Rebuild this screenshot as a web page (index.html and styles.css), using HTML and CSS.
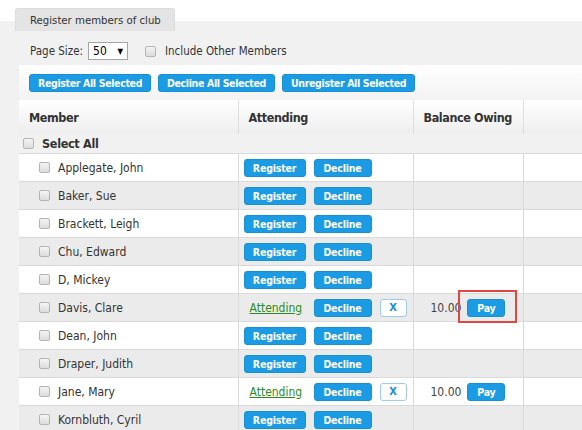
FILE: index.html
```html
<!DOCTYPE html>
<html>
<head>
<meta charset="utf-8">
<link rel="stylesheet" href="styles.css">
</head>
<body>
<div class="page">
  <div class="tab">Register members of club</div>
  <div class="panel">
    <div class="options">
      <span class="label">Page Size:</span>
      <span class="select"><span>50</span><span class="arrow">▼</span></span>
      <span class="cb"></span>
      <span class="label">Include Other Members</span>
    </div>
    <div class="bar">
      <span class="btn big">Register All Selected</span>
      <span class="btn big">Decline All Selected</span>
      <span class="btn big">Unregister All Selected</span>
    </div>
    <table class="grid">
      <colgroup><col class="c1"><col class="c2"><col class="c3"><col class="c4"></colgroup>
      <thead>
        <tr><th>Member</th><th>Attending</th><th>Balance Owing</th><th></th></tr>
      </thead>
      <tbody>
        <tr class="all"><td colspan="4"><span class="cb"></span><b>Select All</b></td></tr>
        <tr><td class="name"><span class="cb"></span>Applegate, John</td><td class="att"><span class="btn reg">Register</span><span class="btn dec">Decline</span></td><td></td><td></td></tr>
        <tr class="alt"><td class="name"><span class="cb"></span>Baker, Sue</td><td class="att"><span class="btn reg">Register</span><span class="btn dec">Decline</span></td><td></td><td></td></tr>
        <tr><td class="name"><span class="cb"></span>Brackett, Leigh</td><td class="att"><span class="btn reg">Register</span><span class="btn dec">Decline</span></td><td></td><td></td></tr>
        <tr class="alt"><td class="name"><span class="cb"></span>Chu, Edward</td><td class="att"><span class="btn reg">Register</span><span class="btn dec">Decline</span></td><td></td><td></td></tr>
        <tr><td class="name"><span class="cb"></span>D, Mickey</td><td class="att"><span class="btn reg">Register</span><span class="btn dec">Decline</span></td><td></td><td></td></tr>
        <tr class="alt"><td class="name"><span class="cb"></span>Davis, Clare</td><td class="att"><a class="going">Attending</a><span class="btn dec">Decline</span><span class="xbtn">X</span></td><td class="bal"><span class="amt">10.00</span><span class="btn pay hl">Pay</span></td><td></td></tr>
        <tr><td class="name"><span class="cb"></span>Dean, John</td><td class="att"><span class="btn reg">Register</span><span class="btn dec">Decline</span></td><td></td><td></td></tr>
        <tr class="alt"><td class="name"><span class="cb"></span>Draper, Judith</td><td class="att"><span class="btn reg">Register</span><span class="btn dec">Decline</span></td><td></td><td></td></tr>
        <tr><td class="name"><span class="cb"></span>Jane, Mary</td><td class="att"><a class="going">Attending</a><span class="btn dec">Decline</span><span class="xbtn">X</span></td><td class="bal"><span class="amt">10.00</span><span class="btn pay">Pay</span></td><td></td></tr>
        <tr class="alt"><td class="name"><span class="cb"></span>Kornbluth, Cyril</td><td class="att"><span class="btn reg">Register</span><span class="btn dec">Decline</span></td><td></td><td></td></tr>
      </tbody>
    </table>
  </div>
</div>
</body>
</html>
```
FILE: styles.css
```css
html, body {
  margin: 0;
  padding: 0;
  overflow: hidden;
}
body {
  font-family: "DejaVu Sans Condensed", "DejaVu Sans", sans-serif;
  font-size: 12px;
  color: #333;
  background: linear-gradient(#fff 21px, #f2f1f2 21px);
  height: 430px;
}
.page {
  padding-top: 8px;
}
.tab {
  display: inline-block;
  margin-left: 15px;
  height: 23px;
  line-height: 23px;
  width: 160px;
  box-sizing: border-box;
  padding-left: 14px;
  font-size: 11.3px;
  background: #e4e4e4;
  border: 1px solid #dcdcdc;
  border-bottom: none;
  border-radius: 3px 3px 0 0;
  color: #333;
}
.panel {
  padding-top: 11px;
}
.options {
  display: flex;
  align-items: center;
  height: 18px;
  padding-left: 30px;
  font-size: 11.5px;
}
.select {
  display: inline-flex;
  justify-content: space-between;
  align-items: center;
  width: 40px;
  height: 18px;
  box-sizing: border-box;
  margin-left: 5px;
  padding: 0 4px 0 4px;
  background: #fff;
  border: 1px solid #a6a6a6;
  color: #000;
  font-size: 12px;
}
.select .arrow {
  font-size: 8px;
}
.options .cb {
  margin: 0 9px 0 17px;
}
.cb {
  display: inline-block;
  width: 11px;
  height: 11px;
  box-sizing: border-box;
  border: 1px solid #b5b5b5;
  border-radius: 2px;
  background: linear-gradient(#f4f4f4, #dcdcdc);
  vertical-align: -1px;
}
.bar {
  margin-top: 5px;
  margin-left: 19px;
  height: 35px;
  box-sizing: border-box;
  padding: 9px 0 0 10px;
  background: linear-gradient(#fff, #f3f3f3);
  display: flex;
  gap: 7px;
  align-items: flex-start;
}
.btn {
  display: inline-block;
  background: #1b9be3;
  color: #fff;
  font-weight: bold;
  font-size: 10.5px;
  letter-spacing: -0.2px;
  border-radius: 3px;
  text-align: center;
  box-sizing: border-box;
  border: 1px solid #1890d4;
}
.btn.big {
  height: 18px;
  line-height: 16px;
  padding: 0 8px;
  letter-spacing: -0.35px;
}
.grid {
  margin-left: 19px;
  width: 563px;
  border-collapse: collapse;
  table-layout: fixed;
}
.c1 { width: 219px; }
.c2 { width: 175px; }
.c3 { width: 110px; }
.c4 { width: 59px; }
.grid th {
  height: 34px;
  padding: 0 0 0 10px;
  text-align: left;
  font-size: 12.5px;
  letter-spacing: -0.4px;
  font-weight: bold;
  color: #333;
  background: linear-gradient(#fff, #eeeeee);
  border-left: 1px solid #dedede;
}
.grid th:first-child {
  border-left: none;
}
.grid tr.all td {
  height: 19px;
  padding: 0 0 0 4px;
  background: #f2f1f2;
  font-size: 12.5px;
  letter-spacing: -0.3px;
  border-top: none;
}
.grid tr.all .cb {
  margin-right: 8px;
}
.grid tbody td {
  height: 27px;
  padding: 0;
  background: #fff;
  border-top: 1px solid #dadada;
  border-left: 1px solid #dadada;
  white-space: nowrap;
}
.grid tbody td:first-child {
  border-left: none;
}
.grid tbody tr.alt td {
  background: #ebebeb;
}
.grid td.name {
  padding-left: 20px;
}
.grid td.name .cb {
  margin-right: 8px;
}
.grid td.att {
  padding-left: 5px;
}
.btn.reg {
  width: 62px;
  height: 18px;
  line-height: 16px;
  margin-right: 8px;
  vertical-align: middle;
}
.btn.dec {
  width: 58px;
  height: 18px;
  line-height: 16px;
  vertical-align: middle;
}
.going {
  display: inline-block;
  width: 64px;
  margin-left: 6px;
  color: #2a8c1f;
  text-decoration: underline;
  vertical-align: middle;
}
.xbtn {
  display: inline-block;
  width: 27px;
  height: 18px;
  line-height: 16px;
  box-sizing: border-box;
  margin-left: 8px;
  background: #fff;
  border: 1px solid #9ccdec;
  border-radius: 3px;
  color: #1b8fd6;
  font-weight: bold;
  font-size: 11px;
  text-align: center;
  vertical-align: middle;
}
.grid td.bal {
  padding-left: 17px;
}
.amt {
  vertical-align: middle;
  color: #444;
}
.btn.pay {
  width: 38px;
  height: 18px;
  line-height: 16px;
  margin-left: 6px;
  vertical-align: middle;
  position: relative;
}
.btn.hl::after {
  content: "";
  position: absolute;
  left: -10px;
  right: -13px;
  top: -10px;
  bottom: -7px;
  border: 2px solid #e2463e;
}
```
